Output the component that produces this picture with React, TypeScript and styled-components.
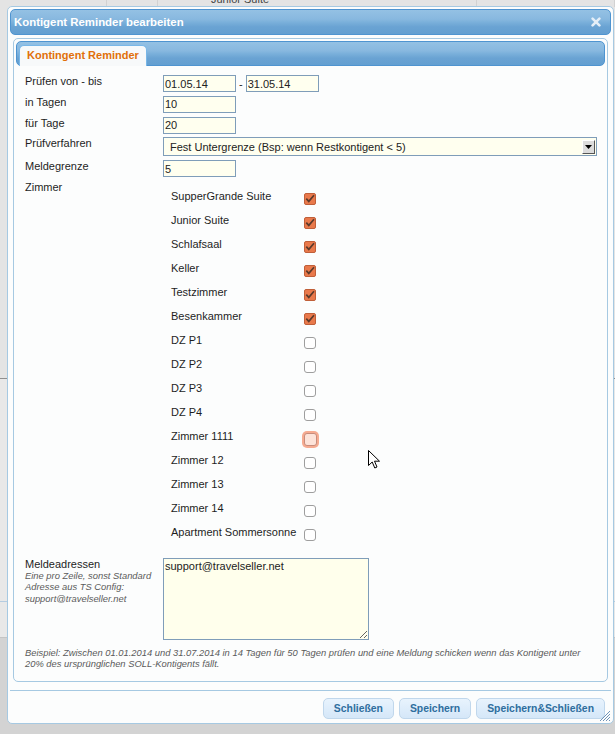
import React from 'react';
import styled, { createGlobalStyle, css } from 'styled-components';

const GlobalStyle = createGlobalStyle`
  html, body { margin: 0; padding: 0; }
  body { font-family: "Liberation Sans", Arial, sans-serif; background: #e6e6e6; color: #222; }
  * { box-sizing: border-box; }
`;

/* ---------- background page (behind the dialog) ---------- */
const Page = styled.div`
  position: relative;
  width: 615px;
  height: 734px;
  overflow: hidden;
  background: #e6e6e6;
  display: flex;
  flex-direction: column;
`;

const BgTop = styled.div`
  height: 379px;
  border-bottom: 1px solid #8f8f8f;
  background: #e4e4e4;
`;

const BgHeader = styled.div`
  display: grid;
  grid-template-columns: 107px 51px 319px 1fr;
  height: 7px;
  overflow: hidden;
`;

const BgCell = styled.div<{ $indent?: number }>`
  border-right: 1px solid #d2d2d2;
  font-size: 11px;
  line-height: 13px;
  color: #444;
  margin-top: -7px;
  padding-left: ${({ $indent }) => $indent ?? 0}px;
  white-space: nowrap;
`;

const BgMid = styled.div<{ $h: number; $line: string; $bg: string }>`
  height: ${({ $h }) => $h}px;
  border-bottom: 1px solid ${({ $line }) => $line};
  background: ${({ $bg }) => $bg};
`;

const BgBottom = styled.div`
  flex: 1;
  background: #d3d3d3;
`;

/* ---------- dialog ---------- */
const Dialog = styled.div`
  position: absolute;
  left: 7px;
  top: 6px;
  width: 607px;
  height: 718px;
  background: #fcfdfd;
  border: 1px solid #a6c9e2;
  border-radius: 5px;
  padding: 2px;
  display: flex;
  flex-direction: column;
`;

const headerBg = css`
  background: linear-gradient(180deg, #94c1e4 0%, #88b8df 38%, #79afda 52%, #6aa3d3 70%, #639fd1 100%);
  border: 1px solid #4f94d0;
  border-radius: 5px;
`;

const TitleBar = styled.div`
  ${headerBg};
  height: 26px;
  display: flex;
  align-items: center;
  justify-content: space-between;
  padding: 0 9px 0 3px;
`;

const Title = styled.span`
  color: #fff;
  font-weight: bold;
  font-size: 11.4px;
  letter-spacing: 0;
`;

const CloseIcon = styled.svg`
  width: 10px;
  height: 10px;
  display: block;
`;

const Panel = styled.div`
  margin: 3px 3px 0 3px;
  border: 1px solid #a6c9e2;
  border-radius: 5px;
  padding: 2px 2px 12px 2px;
  background: #fcfdfd;
`;

const TabBar = styled.div`
  ${headerBg};
  height: 25px;
  padding: 3px 2px 0 2px;
  display: flex;
  align-items: flex-end;
`;

const Tab = styled.div`
  height: 21px;
  margin-bottom: -1px;
  border: 1px solid #79b7e7;
  border-bottom: none;
  border-radius: 5px 5px 0 0;
  background: #f7f9fa;
  padding: 0 7px;
  color: #e17009;
  font-weight: bold;
  font-size: 11px;
  line-height: 19px;
`;

const FormBody = styled.div`
  padding: 9px 9px 0 9px;
  display: flex;
  flex-direction: column;
  gap: 3.75px;
`;

const FieldRow = styled.div<{ $top?: number }>`
  display: grid;
  grid-template-columns: 138px 1fr;
  margin-top: ${({ $top }) => $top ?? 0}px;
`;

const Label = styled.div<{ $lh?: number }>`
  font-size: 11px;
  line-height: ${({ $lh }) => $lh ?? 13}px;
  color: #1e1e1e;
`;

const Inline = styled.div`
  display: flex;
  align-items: center;
`;

const TextInput = styled.input`
  width: 73px;
  height: 17px;
  border: 1px solid #7f9db9;
  background: #ffffef;
  font-family: "Liberation Sans", Arial, sans-serif;
  font-size: 11px;
  color: #222;
  padding: 0 1px;
  margin: 0;
  outline: none;
`;

const Dash = styled.span`
  font-size: 11px;
  padding: 0 3px;
`;

const Select = styled.div`
  width: 434px;
  height: 19px;
  border: 1px solid #7f9db9;
  background: #ffffef;
  display: flex;
  align-items: center;
  justify-content: space-between;
  padding: 0 1px 0 6px;
  font-size: 11px;
  color: #222;
`;

const SelectArrow = styled.span`
  width: 13px;
  height: 14px;
  background: #dcdcdc;
  border-top: 1px solid #fff;
  border-left: 1px solid #fff;
  border-right: 1px solid #555;
  border-bottom: 1px solid #555;
  display: flex;
  align-items: center;
  justify-content: center;
`;

const RoomList = styled.div`
  padding: 9px 0 0 8px;
  display: flex;
  flex-direction: column;
`;

const RoomRow = styled.div`
  display: grid;
  grid-template-columns: 133px 13px;
  height: 24px;
`;

const RoomName = styled.span`
  font-size: 11px;
  line-height: 13px;
  color: #1e1e1e;
  white-space: nowrap;
`;

type BoxState = 'checked' | 'empty' | 'hover';

const Box = styled.span<{ $state: BoxState }>`
  width: 12px;
  height: 12px;
  margin-top: 3px;
  display: flex;
  align-items: center;
  justify-content: center;
  ${({ $state }) =>
    $state === 'checked'
      ? css`
          background: #e9794b;
          border: 1px solid #c05f39;
          border-radius: 2px;
        `
      : $state === 'hover'
      ? css`
          width: 13px;
          height: 13px;
          margin-left: 0;
          background: #fde3d9;
          border: 1px solid #c88c7b;
          border-radius: 3px;
          box-shadow: 0 0 0 2px #f6ab91;
        `
      : css`
          background: #fff;
          border: 1px solid #9e9e9e;
          border-radius: 3px;
        `}
`;

const Note = styled.div`
  font-size: 9.4px;
  line-height: 11.7px;
  font-style: italic;
  color: #5a5a5a;
  white-space: nowrap;
`;

const TextArea = styled.textarea`
  width: 206px;
  height: 82px;
  border: 1px solid #7f9db9;
  background: #ffffec;
  font-family: "Liberation Sans", Arial, sans-serif;
  font-size: 11px;
  line-height: 13px;
  color: #222;
  padding: 1px;
  margin: 0;
  display: block;
  outline: none;
`;

const Example = styled.div`
  margin-top: 4px;
  font-size: 9.4px;
  line-height: 11px;
  font-style: italic;
  color: #5a5a5a;
  white-space: nowrap;
`;

const ButtonPane = styled.div`
  margin-top: 8px;
  border-top: 1px solid #a6c9e2;
  padding: 7px 6px 0 0;
  display: flex;
  justify-content: flex-end;
  gap: 5px;
`;

const Button = styled.button`
  height: 21px;
  padding: 0 10px;
  border: 1px solid #c0d7ec;
  border-radius: 5px;
  background: linear-gradient(180deg, #e8f3fd 0%, #deedfb 50%, #d5e7f8 100%);
  color: #2e6e9e;
  font-family: "Liberation Sans", Arial, sans-serif;
  font-weight: bold;
  font-size: 10.4px;
  cursor: pointer;
`;

const Grip = styled.svg`
  position: absolute;
  right: 2px;
  bottom: 1px;
  width: 13px;
  height: 13px;
`;

const Cursor = styled.svg`
  position: absolute;
  left: 368px;
  top: 450px;
  width: 13px;
  height: 20px;
`;

const rooms: { name: string; state: BoxState }[] = [
  { name: 'SupperGrande Suite', state: 'checked' },
  { name: 'Junior Suite', state: 'checked' },
  { name: 'Schlafsaal', state: 'checked' },
  { name: 'Keller', state: 'checked' },
  { name: 'Testzimmer', state: 'checked' },
  { name: 'Besenkammer', state: 'checked' },
  { name: 'DZ P1', state: 'empty' },
  { name: 'DZ P2', state: 'empty' },
  { name: 'DZ P3', state: 'empty' },
  { name: 'DZ P4', state: 'empty' },
  { name: 'Zimmer 1111', state: 'hover' },
  { name: 'Zimmer 12', state: 'empty' },
  { name: 'Zimmer 13', state: 'empty' },
  { name: 'Zimmer 14', state: 'empty' },
  { name: 'Apartment Sommersonne', state: 'empty' },
];

const Check = () => (
  <svg width="10" height="10" viewBox="0 0 10 10">
    <polyline points="1.3,4.6 3.8,7.4 9,1.2" fill="none" stroke="#5b3a2b" strokeWidth="1.7" />
  </svg>
);

export default function App() {
  return (
    <>
      <GlobalStyle />
      <Page>
        <BgTop>
          <BgHeader>
            <BgCell />
            <BgCell />
            <BgCell $indent={53}>Junior Suite</BgCell>
            <BgCell />
          </BgHeader>
        </BgTop>
        <BgMid $h={223} $line="#b5cce0" $bg="#e8e8e8" />
        <BgMid $h={36} $line="#c4c4c4" $bg="#e8e8e8" />
        <BgBottom />

        <Dialog>
          <TitleBar>
            <Title>Kontigent Reminder bearbeiten</Title>
            <CloseIcon viewBox="0 0 10 10">
              <path d="M1.6 1.6 L8.4 8.4 M8.4 1.6 L1.6 8.4" stroke="#e4eef7" strokeWidth="2.6" strokeLinecap="round" />
            </CloseIcon>
          </TitleBar>

          <Panel>
            <TabBar>
              <Tab>Kontingent Reminder</Tab>
            </TabBar>

            <FormBody>
              <FieldRow>
                <Label>Prüfen von - bis</Label>
                <Inline>
                  <TextInput defaultValue="01.05.14" />
                  <Dash>-</Dash>
                  <TextInput defaultValue="31.05.14" />
                </Inline>
              </FieldRow>
              <FieldRow>
                <Label>in Tagen</Label>
                <Inline>
                  <TextInput defaultValue="10" />
                </Inline>
              </FieldRow>
              <FieldRow>
                <Label>für Tage</Label>
                <Inline>
                  <TextInput defaultValue="20" />
                </Inline>
              </FieldRow>
              <FieldRow>
                <Label>Prüfverfahren</Label>
                <Select>
                  <span>Fest Untergrenze (Bsp: wenn Restkontigent &lt; 5)</span>
                  <SelectArrow>
                    <svg width="7" height="4" viewBox="0 0 7 4">
                      <polygon points="0,0 7,0 3.5,4" fill="#000" />
                    </svg>
                  </SelectArrow>
                </Select>
              </FieldRow>
              <FieldRow>
                <Label>Meldegrenze</Label>
                <Inline>
                  <TextInput defaultValue="5" />
                </Inline>
              </FieldRow>
              <FieldRow>
                <Label>Zimmer</Label>
                <RoomList>
                  {rooms.map((r) => (
                    <RoomRow key={r.name}>
                      <RoomName>{r.name}</RoomName>
                      <Box $state={r.state}>{r.state === 'checked' && <Check />}</Box>
                    </RoomRow>
                  ))}
                </RoomList>
              </FieldRow>
              <FieldRow $top={4}>
                <div>
                  <Label $lh={12}>Meldeadressen</Label>
                  <Note>
                    Eine pro Zeile, sonst Standard
                    <br />
                    Adresse aus TS Config:
                    <br />
                    support@travelseller.net
                  </Note>
                </div>
                <div>
                  <TextArea defaultValue="support@travelseller.net" />
                </div>
              </FieldRow>
              <Example>
                Beispiel: Zwischen 01.01.2014 und 31.07.2014 in 14 Tagen für 50 Tagen prüfen und eine Meldung schicken wenn das Kontigent unter
                <br />
                20% des ursprünglichen SOLL-Kontigents fällt.
              </Example>
            </FormBody>
          </Panel>

          <ButtonPane>
            <Button>Schließen</Button>
            <Button>Speichern</Button>
            <Button>Speichern&amp;Schließen</Button>
          </ButtonPane>

          <Grip viewBox="0 0 13 13">
            <path d="M12 2 L2 12 M12 5 L5 12 M12 8 L8 12 M12 11 L11 12" stroke="#6f93b8" strokeWidth="1" />
          </Grip>
        </Dialog>

        <Cursor viewBox="0 0 13 20">
          <path d="M0.5 0.5 L0.5 15.5 L4.2 12 L6.8 18 L9 17 L6.5 11.2 L11.5 11.2 Z" fill="#fff" stroke="#000" strokeWidth="1" strokeLinejoin="round" />
        </Cursor>
      </Page>
    </>
  );
}
